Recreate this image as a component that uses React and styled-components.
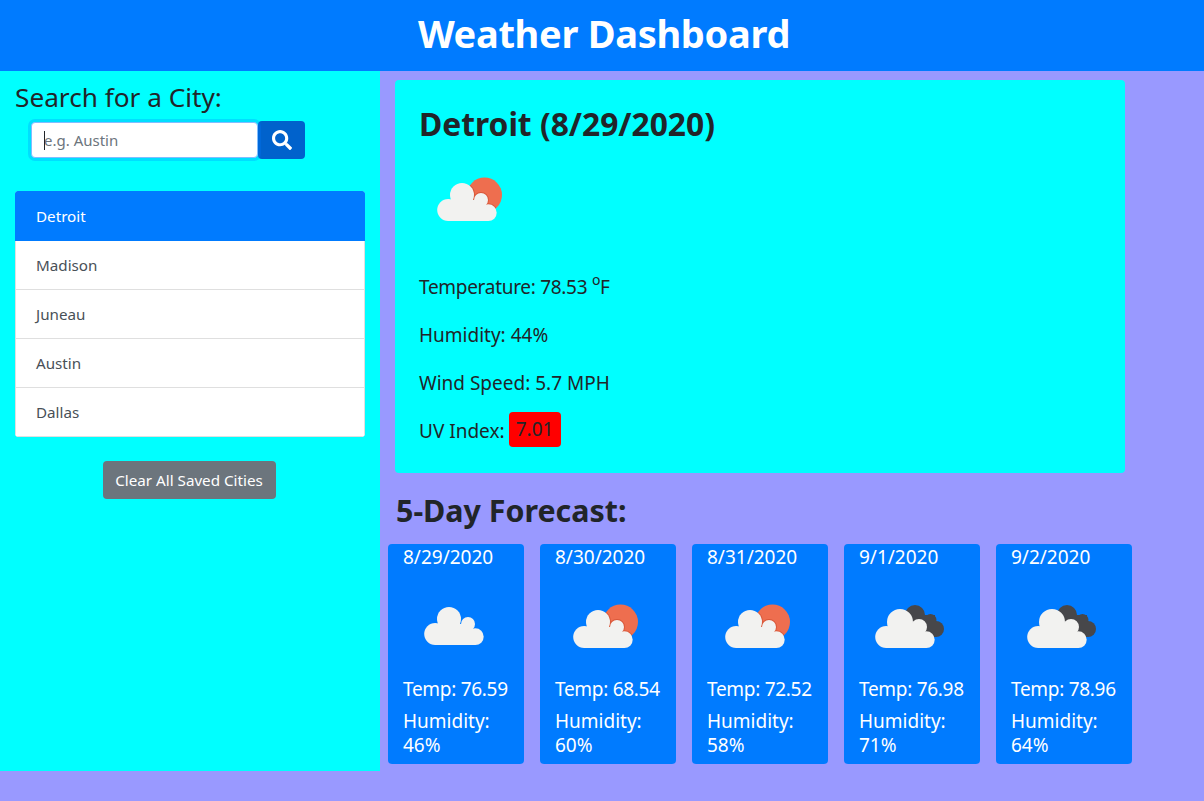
import React from "react";
import styled, { createGlobalStyle } from "styled-components";

const Global = createGlobalStyle`
  html, body { margin: 0; padding: 0; }
  body {
    background: #9999ff;
    color: #212529;
    font-family: "Noto Sans", "Open Sans", sans-serif;
    font-size: 16px;
    min-height: 801px;
    overflow: hidden;
  }
  * { box-sizing: border-box; }
`;

const Header = styled.header`
  height: 71px;
  background: #007bff;
  color: #fff;
  display: flex;
  align-items: center;
  justify-content: center;
  padding: 0 0 6px 4px;
`;
const Title = styled.h1`
  margin: 0;
  font-size: 38px;
  font-weight: 700;
  letter-spacing: -0.3px;
`;
const Body = styled.div`
  display: flex;
  align-items: flex-start;
`;
const Sidebar = styled.aside`
  width: 380px;
  height: 700px;
  background: #00ffff;
  padding: 8px 15px 0;
  display: flex;
  flex-direction: column;
`;
const SearchLabel = styled.h2`
  margin: 0 0 6px;
  font-size: 26.2px;
  font-weight: 400;
  line-height: 36px;
`;
const SearchRow = styled.form`
  display: flex;
  align-items: center;
  margin: 0 0 32px 16px;
  height: 38px;
`;
const InputWrap = styled.div`
  position: relative;
  width: 227px;
  height: 36px;
`;
const Input = styled.input`
  width: 100%;
  height: 100%;
  border: 1px solid #80bdff;
  border-radius: 4px;
  box-shadow: 0 0 0 3px rgba(0, 123, 255, 0.25);
  padding: 0 12px;
  font: inherit;
  font-size: 15px;
  outline: none;
  &::placeholder { color: #6c757d; opacity: 1; }
`;
const Caret = styled.span`
  position: absolute;
  left: 13px;
  top: 9px;
  width: 1px;
  height: 19px;
  background: #212529;
`;
const SearchButton = styled.button`
  width: 47px;
  height: 38px;
  border: none;
  border-radius: 4px;
  background: #0062cc;
  color: #fff;
  display: flex;
  align-items: center;
  justify-content: center;
  padding: 0;
`;
const CityList = styled.ul`
  list-style: none;
  margin: 0;
  padding: 0;
  border-radius: 4px;
  overflow: hidden;
  background: #fff;
`;
const City = styled.li`
  height: 49px;
  padding: 0 20px;
  display: flex;
  align-items: center;
  font-size: 15.2px;
  color: ${(p) => (p.$active ? "#fff" : "#495057")};
  background: ${(p) => (p.$active ? "#007bff" : "#fff")};
  border-style: solid;
  border-width: 0 1px 1px;
  border-color: ${(p) => (p.$active ? "#007bff" : "rgba(0, 0, 0, 0.125)")};
  &:first-child {
    height: 50px;
    border-top-width: 1px;
  }
`;
const ClearButton = styled.button`
  align-self: center;
  margin: 24px 2px 0 0;
  height: 38px;
  padding: 0 12px;
  width: 173px;
  border: none;
  border-radius: 4px;
  background: #6c757d;
  color: #fff;
  font: inherit;
  font-size: 15.2px;
  white-space: nowrap;
`;
const Main = styled.main`
  flex: 1;
  padding-top: 9px;
`;
const CurrentCard = styled.section`
  margin-left: 15px;
  width: 730px;
  height: 393px;
  background: #00ffff;
  border-radius: 4px;
  padding: 20px 24px 0 25px;
`;
const CityTitle = styled.h2`
  margin: 0 0 0 -1px;
  font-size: 31.75px;
  font-weight: 700;
  line-height: 48px;
`;
const IconBox = styled.div`
  height: 100px;
  margin-top: 2px;
  margin-bottom: 13px;
`;
const Stat = styled.p`
  margin: 0 0 0 -1px;
  height: 48px;
  display: flex;
  align-items: center;
  font-size: 19px;
  white-space: pre;
  letter-spacing: ${(p) => (p.$tight ? "-0.3px" : "0")};
`;
const Sup = styled.sup`
  font-size: 14px;
  line-height: 0;
  position: relative;
  top: -7px;
`;
const UV = styled.span`
  display: inline-flex;
  align-items: center;
  justify-content: center;
  width: 52px;
  height: 35px;
  margin: 0 0 4px 4px;
  background: #ff0000;
  border-radius: 4px;
`;
const ForecastTitle = styled.h2`
  margin: 16px 0 0 16px;
  font-size: 30.4px;
  font-weight: 700;
  line-height: 44px;
`;
const ForecastRow = styled.div`
  display: flex;
  gap: 16px;
  margin: 11px 0 0 8px;
`;
const DayCard = styled.article`
  width: 136px;
  height: 220px;
  background: #007bff;
  color: #fff;
  border-radius: 4px;
  padding: 0 15px;
  font-size: 19px;
  display: flex;
  flex-direction: column;
`;
const DayDate = styled.div`
  line-height: 26px;
  white-space: nowrap;
`;
const DayIcon = styled.div`
  height: 100px;
  margin: 7px 0 0 1px;
  flex: none;
`;
const DayStat = styled.div`
  line-height: 24px;
  margin-top: ${(p) => p.$gap}px;
  white-space: ${(p) => (p.$nowrap ? "nowrap" : "normal")};
  letter-spacing: ${(p) => (p.$nowrap ? "-0.3px" : "0")};
`;

const Cloud = ({ x = 0, y = 0, edge }) => (
  <g transform={`translate(${x} ${y})`}>
    {edge && (
      <g fill={edge} stroke={edge} strokeWidth="2">
        <circle cx="42" cy="45" r="12" />
        <circle cx="61" cy="50" r="7" />
      </g>
    )}
    <g fill="#f2f2f0">
      <circle cx="42" cy="45" r="12" />
      <circle cx="61" cy="50" r="7" />
      <circle cx="28.2" cy="60" r="11" />
      <circle cx="68.3" cy="62.7" r="8.4" />
      <rect x="28" y="50" width="33" height="21" />
      <rect x="60" y="55" width="8.5" height="16" />
    </g>
  </g>
);

const WeatherIcon = ({ type }) => (
  <svg width="100" height="100" viewBox="0 0 100 100" aria-hidden="true">
    <defs>
      <clipPath id="sun-disc">
        <circle cx="64.5" cy="45" r="17.5" />
      </clipPath>
    </defs>
    {type === "sun" && (
      <>
        <circle cx="64.5" cy="45" r="17.5" fill="#ee6e4f" />
        <g clipPath="url(#sun-disc)" fill="#d9583a" stroke="#d9583a" strokeWidth="2">
          <circle cx="42" cy="45" r="12" />
          <circle cx="61" cy="50" r="7" />
          <circle cx="68.3" cy="62.7" r="8.4" />
        </g>
      </>
    )}
    {type === "dark" && (
      <g fill="#47474a">
        <circle cx="55" cy="38" r="10" />
        <circle cx="70.5" cy="43" r="6" />
        <circle cx="76" cy="52" r="8" />
        <rect x="55" y="38" width="20" height="22" />
      </g>
    )}
    {type === "cloud" && <Cloud x={3} y={-3} />}
    {type === "sun" && <Cloud />}
    {type === "dark" && <Cloud x={-2} edge="#f2f2f0" />}
  </svg>
);

const cities = ["Detroit", "Madison", "Juneau", "Austin", "Dallas"];
const days = [
  { date: "8/29/2020", temp: "76.59", hum: "46%", icon: "cloud" },
  { date: "8/30/2020", temp: "68.54", hum: "60%", icon: "sun" },
  { date: "8/31/2020", temp: "72.52", hum: "58%", icon: "sun" },
  { date: "9/1/2020", temp: "76.98", hum: "71%", icon: "dark" },
  { date: "9/2/2020", temp: "78.96", hum: "64%", icon: "dark" },
];

export default function App() {
  return (
    <>
      <Global />
      <Header>
        <Title>Weather Dashboard</Title>
      </Header>
      <Body>
        <Sidebar>
          <SearchLabel>Search for a City:</SearchLabel>
          <SearchRow onSubmit={(e) => e.preventDefault()}>
            <InputWrap>
              <Input placeholder="e.g. Austin" />
              <Caret />
            </InputWrap>
            <SearchButton aria-label="Search">
              <svg width="20" height="20" viewBox="0 0 512 512" fill="currentColor">
                <path d="M505 442.7L405.3 343c-4.5-4.5-10.6-7-17-7H372c27.6-35.3 44-79.7 44-128C416 93.1 322.9 0 208 0S0 93.1 0 208s93.1 208 208 208c48.3 0 92.7-16.4 128-44v16.3c0 6.4 2.5 12.5 7 17l99.7 99.7c9.4 9.4 24.6 9.4 33.9 0l28.3-28.3c9.4-9.4 9.4-24.6.1-34zM208 336c-70.7 0-128-57.2-128-128 0-70.7 57.2-128 128-128 70.7 0 128 57.2 128 128 0 70.7-57.2 128-128 128z" />
              </svg>
            </SearchButton>
          </SearchRow>
          <CityList>
            {cities.map((c, i) => (
              <City key={c} $active={i === 0}>{c}</City>
            ))}
          </CityList>
          <ClearButton>Clear All Saved Cities</ClearButton>
        </Sidebar>
        <Main>
          <CurrentCard>
            <CityTitle>Detroit (8/29/2020)</CityTitle>
            <IconBox>
              <WeatherIcon type="sun" />
            </IconBox>
            <Stat $tight>Temperature: 78.53 <Sup>o</Sup>F</Stat>
            <Stat>Humidity: 44%</Stat>
            <Stat>Wind Speed: 5.7 MPH</Stat>
            <Stat>UV Index:<UV>7.01</UV></Stat>
          </CurrentCard>
          <ForecastTitle>5-Day Forecast:</ForecastTitle>
          <ForecastRow>
            {days.map((d) => (
              <DayCard key={d.date}>
                <DayDate>{d.date}</DayDate>
                <DayIcon>
                  <WeatherIcon type={d.icon} />
                </DayIcon>
                <DayStat $gap={0} $nowrap>Temp: {d.temp}</DayStat>
                <DayStat $gap={8}>Humidity: {d.hum}</DayStat>
              </DayCard>
            ))}
          </ForecastRow>
        </Main>
      </Body>
    </>
  );
}
